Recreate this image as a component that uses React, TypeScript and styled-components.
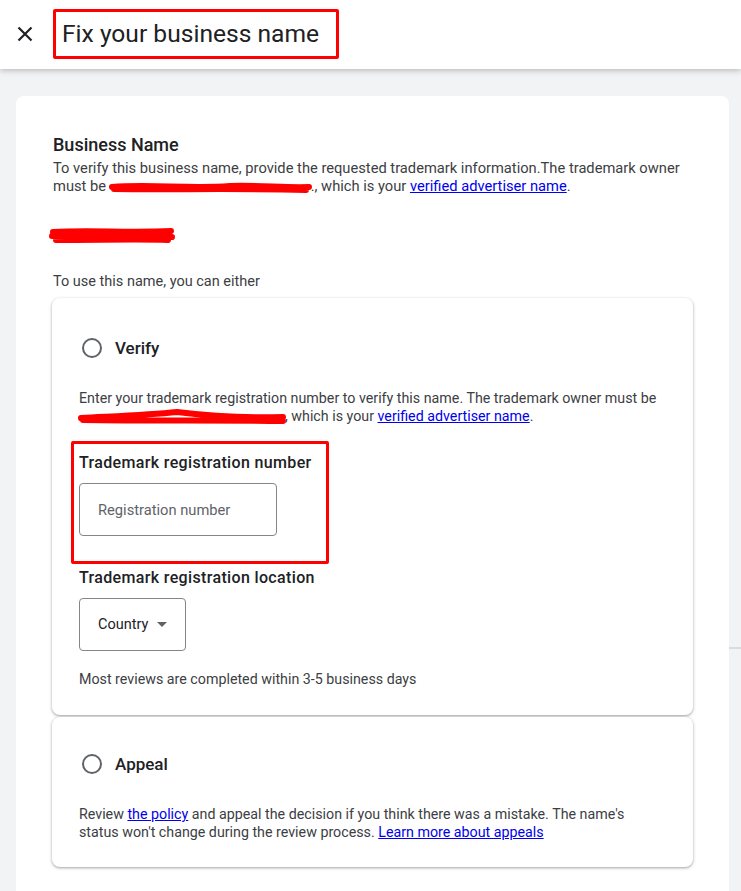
import styled, { createGlobalStyle } from "styled-components";

const GlobalStyle = createGlobalStyle`
  html, body {
    margin: 0;
    padding: 0;
    background: #f1f3f4;
  }
  body {
    font-family: Roboto, "Liberation Sans", Arial, sans-serif;
    color: #3c4043;
  }
`;

const Scribble = ({ width, height, d }: { width: number; height: number; d: string }) => (
  <ScribbleSvg width={width} height={height} viewBox={`0 0 ${width} ${height}`}>
    <path d={d} />
  </ScribbleSvg>
);

const RadioOption = ({ label }: { label: string }) => (
  <RadioRow>
    <RadioCircle />
    <RadioLabel>{label}</RadioLabel>
  </RadioRow>
);

const App = () => {
  return (
    <>
      <GlobalStyle />
      <Page>
        <Header>
          <CloseButton aria-label="Close">
            <svg width="16" height="16" viewBox="0 0 16 16">
              <path d="M1.5 1.5 L14.5 14.5 M14.5 1.5 L1.5 14.5" stroke="#202124" strokeWidth="2.2" />
            </svg>
          </CloseButton>
          <TitleBox>
            <Title>Fix your business name</Title>
          </TitleBox>
        </Header>

        <Content>
          <MainCard>
            <SectionTitle>Business Name</SectionTitle>
            <Paragraph $size={14.7}>
              To verify this business name, provide the requested trademark information.The trademark owner
              <br />
              must be{" "}
              <Scribble
                width={201}
                height={12}
                d="M2 6 C40 3 80 8 120 5 C150 4 175 7 199 6 M4 8 C60 9 120 7 196 9"
              />
              ., which is your <Link href="#">verified advertiser name</Link>.
            </Paragraph>
            <NameBlock>
              <Scribble
                width={124}
                height={18}
                d="M3 7 C40 5 80 8 121 6 M2 11 C45 12 90 10 122 12 M6 15 C50 15 90 14 118 15"
              />
            </NameBlock>
            <Intro $size={14.5}>To use this name, you can either</Intro>

            <OptionCard>
              <RadioOption label="Verify" />
              <CardText>
                Enter your trademark registration number to verify this name. The trademark owner must be
                <br />
                <Scribble
                  width={206}
                  height={14}
                  d="M2 9 C40 7 70 6 98 3 C130 7 170 9 204 8 M4 11 C70 12 140 11 204 12"
                />
                , which is your <Link href="#">verified advertiser name</Link>.
              </CardText>

              <HighlightGroup>
                <FieldLabel>Trademark registration number</FieldLabel>
                <TextField placeholder="Registration number" />
              </HighlightGroup>

              <FieldLabel>Trademark registration location</FieldLabel>
              <SelectBox>
                Country
                <Caret />
              </SelectBox>

              <Note>Most reviews are completed within 3-5 business days</Note>
            </OptionCard>

            <OptionCard $second>
              <RadioOption label="Appeal" />
              <CardText>
                Review <Link href="#">the policy</Link> and appeal the decision if you think there was a mistake.
                The name's
                <br />
                status won't change during the review process. <Link href="#">Learn more about appeals</Link>
              </CardText>
            </OptionCard>
          </MainCard>
          <SideGutter>
            <GutterLine />
          </SideGutter>
        </Content>
      </Page>
    </>
  );
};

const Page = styled.div`
  min-height: 891px;
  display: flex;
  flex-direction: column;
  background: #f1f3f4;
`;

const Header = styled.header`
  position: relative;
  z-index: 1;
  height: 69px;
  display: flex;
  align-items: center;
  background: #fff;
  box-shadow: 0 2px 5px rgba(60, 64, 67, 0.28);
  padding-left: 17px;
  box-sizing: border-box;
`;

const CloseButton = styled.span`
  display: flex;
  width: 16px;
  height: 16px;
  margin-top: -2px;
`;

const TitleBox = styled.div`
  margin-left: 20px;
  margin-top: -2px;
  height: 50px;
  width: 286px;
  box-sizing: border-box;
  border: 3px solid #ff0000;
  border-radius: 2px;
  display: flex;
  align-items: center;
  padding-left: 6px;
`;

const Title = styled.h1`
  margin: 0;
  font-size: 24.6px;
  font-weight: 400;
  color: #202124;
`;

const Content = styled.div`
  display: flex;
  padding-top: 27px;
  flex: 1;
`;

const MainCard = styled.main`
  margin-left: 16px;
  width: 713px;
  box-sizing: border-box;
  background: #fff;
  border-radius: 8px 8px 0 0;
  padding: 37px 36px 24px 37px;
`;

const SideGutter = styled.div`
  flex: 1;
  padding-top: 551px;
`;

const GutterLine = styled.div`
  height: 2px;
  background: #dadce0;
`;

const SectionTitle = styled.h2`
  margin: 0 0 2px;
  font-size: 18px;
  line-height: 24px;
  font-weight: 500;
  color: #202124;
`;

const Paragraph = styled.p<{ $size?: number }>`
  margin: 0;
  font-size: ${({ $size }) => $size ?? 14.25}px;
  line-height: 18px;
  color: #3c4043;
`;

const CardText = styled(Paragraph)`
  margin-top: 17px;
`;

const Link = styled.a`
  color: #0000ee;
  text-decoration: underline;
`;

const ScribbleSvg = styled.svg`
  vertical-align: -2px;
  overflow: visible;

  & path {
    fill: none;
    stroke: #ff0000;
    stroke-width: 6;
    stroke-linecap: round;
  }
`;

const NameBlock = styled.div`
  margin-top: 30px;
  margin-left: -3px;
  height: 18px;
  display: flex;
`;

const Intro = styled(Paragraph)`
  margin-top: 30px;
`;

const OptionCard = styled.section<{ $second?: boolean }>`
  margin-top: ${({ $second }) => ($second ? "2px" : "7px")};
  margin-left: -1px;
  width: 641px;
  box-sizing: border-box;
  background: #fff;
  border-radius: 8px;
  box-shadow: 0 1px 2px rgba(60, 64, 67, 0.3), 0 1px 3px 1px rgba(60, 64, 67, 0.15);
  padding: ${({ $second }) => ($second ? "23px 27px 26px" : "26px 27px 27px")};
`;

const RadioRow = styled.div`
  height: 48px;
  display: flex;
  align-items: center;
`;

const RadioCircle = styled.span`
  width: 20px;
  height: 20px;
  box-sizing: border-box;
  border: 2px solid #5f6368;
  border-radius: 50%;
  margin-left: 3px;
`;

const RadioLabel = styled.span`
  margin-left: 13px;
  font-size: 17px;
  font-weight: 500;
  color: #202124;
`;

const HighlightGroup = styled.div`
  margin-top: 16px;
  margin-left: -8px;
  width: 258px;
  box-sizing: border-box;
  border: 3px solid #ff0000;
  border-radius: 2px;
  padding: 9px 5px 25px;
  margin-bottom: 4px;
`;

const FieldLabel = styled.div`
  font-size: 16px;
  line-height: 20px;
  font-weight: 500;
  letter-spacing: 0.35px;
  color: #202124;
  white-space: nowrap;
`;

const TextField = styled.input`
  display: block;
  margin-top: 10px;
  width: 198px;
  height: 53px;
  box-sizing: border-box;
  border: 1px solid #80868b;
  border-radius: 4px;
  padding: 0 18px;
  font-family: Roboto, "Liberation Sans", Arial, sans-serif;
  font-size: 14.7px;
  color: #202124;
  outline: none;

  &::placeholder {
    color: #5f6368;
  }
`;

const SelectBox = styled.div`
  margin-top: 10px;
  width: 107px;
  height: 53px;
  box-sizing: border-box;
  border: 1px solid #80868b;
  border-radius: 4px;
  padding-left: 18px;
  display: flex;
  align-items: center;
  font-size: 14.5px;
  color: #202124;
`;

const Caret = styled.span`
  margin-left: 9px;
  width: 0;
  height: 0;
  border-left: 5px solid transparent;
  border-right: 5px solid transparent;
  border-top: 5px solid #5f6368;
`;

const Note = styled(Paragraph)`
  margin-top: 19px;
`;

export default App;
